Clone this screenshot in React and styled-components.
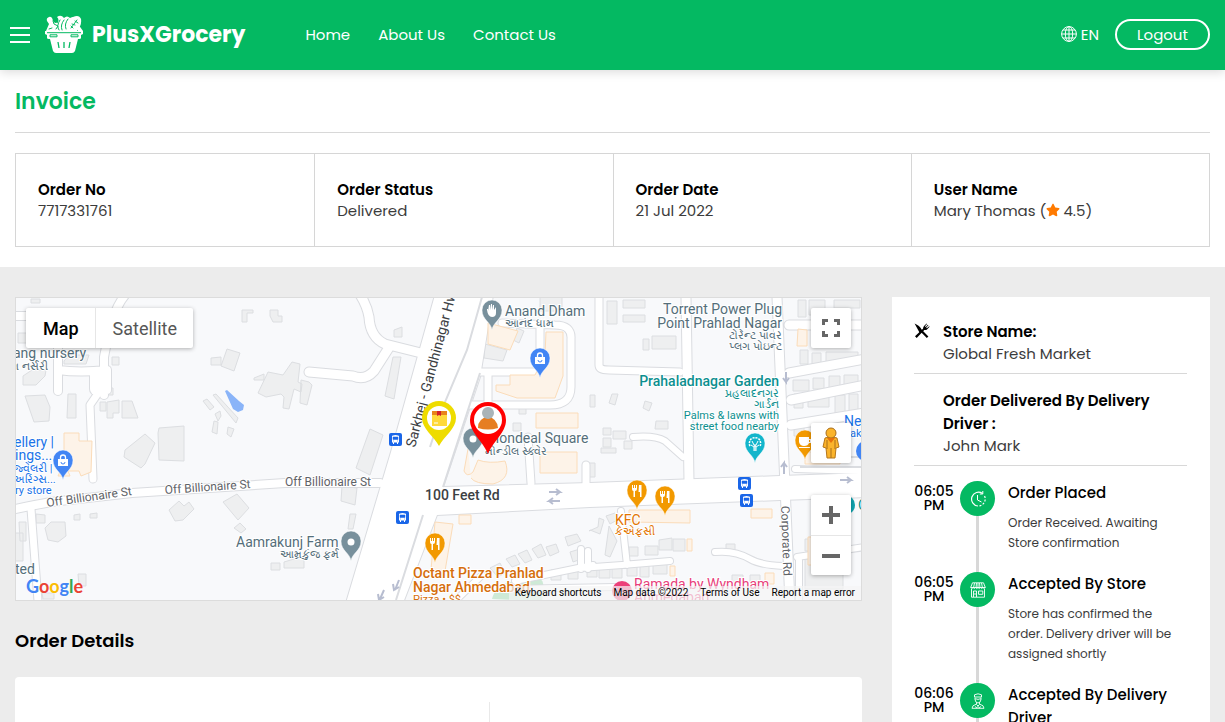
import React from 'react';
import styled, { createGlobalStyle } from 'styled-components';
import { FaStar } from 'react-icons/fa';

const GlobalStyle = createGlobalStyle`
    *, *::before, *::after { box-sizing: border-box; }
    body {
        margin: 0;
        background-color: #ececec;
        color: #000;
        font-family: Poppins, Inter, sans-serif;
        font-size: 15px;
    }
    h1, h2, h3, p, ul, ol, dl, dd { margin: 0; padding: 0; }
    ul, ol { list-style: none; }
    a { color: inherit; text-decoration: none; }
    button {
        font: inherit;
        padding: 0;
        border: 0;
        background: none;
        color: inherit;
        cursor: pointer;
    }
    svg { display: block; }
`;

const Header = styled.header`
    position: relative;
    z-index: 2;
    display: flex;
    align-items: center;
    height: 70px;
    padding: 0 15px 2px 10px;
    background-color: #04b962;
    color: #fff;
    box-shadow: 0 2px 10px rgba(0,0,0,0.15);
`;

const MenuButton = styled.button`
    display: flex;
    flex-direction: column;
    gap: 5px;
    width: 20px;
    padding-top: 2px;
    margin-right: 15px;
    span {
        height: 2px;
        background-color: #fff;
    }
`;

const Brand = styled.a`
    display: flex;
    align-items: center;
    gap: 8px;
    font-size: 22px;
    font-weight: 700;
`;

const Nav = styled.nav`
    display: flex;
    gap: 28px;
    margin-left: 60px;
    flex: 1;
    font-size: 15px;
`;

const Language = styled.button`
    display: flex;
    align-items: center;
    gap: 4px;
    margin-right: 16px;
    font-size: 15px;
`;

const Logout = styled.button`
    width: 95px;
    height: 31px;
    border: 2px solid #fff;
    border-radius: 16px;
    font-size: 15px;
`;

const Summary = styled.section`
    padding: 16px 15px 20px;
    background-color: #fff;
`;

const Title = styled.h1`
    padding-bottom: 14px;
    border-bottom: 1px solid #d8d8d8;
    margin-bottom: 20px;
    color: #04b962;
    font-size: 22px;
    line-height: 32px;
    font-weight: 600;
`;

const Facts = styled.dl`
    display: grid;
    grid-template-columns: repeat(4, 1fr);
    border: 1px solid #d6d6d6;
    line-height: 21px;
`;

const Fact = styled.div`
    padding: 25px 22px;
    & + & { border-left: 1px solid #d6d6d6; }
    dt { font-weight: 600; font-size: 15px; }
    dd {
        display: flex;
        align-items: center;
        color: #3c3c3c;
    }
    svg { margin: 0 3px 2px 0; color: #ff7a00; }
`;

const Columns = styled.main`
    display: grid;
    grid-template-columns: minmax(0, 1fr) 318px;
    align-items: start;
    gap: 30px;
    padding: 30px 15px;
`;

const MapBox = styled.div`
    position: relative;
    height: 304px;
    border: 1px solid #dcdcdc;
    overflow: hidden;
    font-family: Roboto, Arial, sans-serif;
    > svg { width: 100%; height: 100%; }
`;

const MapControl = styled.div`
    position: absolute;
    display: flex;
    flex-direction: ${p => (p.$column ? 'column' : 'row')};
    ${p => (p.$left ? 'left: 10px;' : 'right: 10px;')}
    top: ${p => p.$top}px;
    background-color: #fff;
    border-radius: 2px;
    box-shadow: 0 1px 4px rgba(0,0,0,0.3);
    button {
        display: flex;
        align-items: center;
        justify-content: center;
        width: ${p => (p.$left ? 'auto' : '40px')};
        height: 40px;
        padding: ${p => (p.$left ? '0 16px 0 17px' : '0')};
        color: #565656;
        font-size: 18px;
    }
    button + button {
        ${p => (p.$column ? 'border-top' : 'border-left')}: 1px solid #e6e6e6;
    }
    button[aria-pressed='true'] { color: #000; font-weight: 500; }
`;

const MapFooter = styled.div`
    position: absolute;
    right: 0;
    bottom: 0;
    display: flex;
    gap: 12px;
    padding: 0 6px;
    background-color: rgba(245,245,245,0.7);
    color: #000;
    font-size: 10px;
    line-height: 14px;
`;

const Google = styled.a`
    position: absolute;
    left: 10px;
    bottom: 2px;
    font-family: Lato, sans-serif;
    font-size: 18px;
    line-height: 24px;
    font-weight: 700;
    text-shadow: 0 0 2px #fff;
`;

const Letter = styled.span`
    color: ${p => p.$color};
`;

const SectionTitle = styled.h2`
    margin: 24px 0 20px;
    font-size: 18px;
    line-height: 32px;
    font-weight: 600;
`;

const Details = styled.section`
    display: grid;
    grid-template-columns: 474px 1fr;
    padding: 25px 0;
    min-height: 260px;
    border-radius: 4px;
    background-color: #fff;
    div + div { border-left: 1px solid #e9e9e9; }
`;

const Side = styled.aside`
    padding: 23px 23px 24px 22px;
    background-color: #fff;
`;

const Party = styled.div`
    display: grid;
    grid-template-columns: 16px 1fr;
    column-gap: 13px;
    padding-bottom: 8px;
    border-bottom: 1px solid #d8d8d8;
    line-height: 22px;
    & + & { padding-top: 15px; }
    > svg { margin-top: 3px; }
    h3 {
        grid-column: 2;
        font-size: 15px;
        line-height: 23px;
        font-weight: 600;
    }
    p { grid-column: 2; color: #3c3c3c; }
`;

const Timeline = styled.ol`
    margin-top: 15px;
`;

const Step = styled.li`
    position: relative;
    display: grid;
    grid-template-columns: 40px 35px 1fr;
    time {
        padding-top: 3px;
        font-size: 14px;
        line-height: 14px;
        font-weight: 500;
        text-align: center;
    }
`;

const Track = styled.div`
    display: flex;
    justify-content: center;
    margin-left: 6px;
    width: 35px;
    background: linear-gradient(#d8d8d8, #d8d8d8) center / 3px 100% no-repeat;
`;

const Dot = styled.span`
    display: flex;
    align-items: center;
    justify-content: center;
    width: 35px;
    height: 35px;
    border-radius: 50%;
    background-color: #04b962;
`;

const StepBody = styled.div`
    padding: 0 0 19px 19px;
    h3 {
        margin-bottom: 9px;
        font-size: 15px;
        line-height: 23px;
        font-weight: 500;
    }
    p {
        color: #3c3c3c;
        font-size: 12px;
        line-height: 20px;
    }
`;

const BasketLogo = () => (
    <svg width="39" height="39" viewBox="0 0 39 39" fill="#fff">
        <path d="M1 16 4 9 2 6Q1 3 4 2q3-1 4 4l2 2q4-1 5 3l1 5z" />
        <path d="M12 2q4-3 7 1 3-3 6 0 4-2 5 0l-8 14h-9q4-5-1-8 3-4 0-7z" />
        <path d="M22 16q-1-10 6-14 6-3 8 2 1 6-4 12z" />
        <path d="M33 9l5 7h-5z" />
        <g fill="none" stroke="#04b962" strokeWidth="1" strokeLinecap="round">
            <path d="M14 15q-3-4 1-10M17 15q-2-5 2-10M21 14q-2-5 2-10M8 6l1 3 4 2-2 3M4 14l3-1M26 13l6-8M27 9l3 1M30 6l3 2M26 11l2 2" />
        </g>
        <path d="M0 16h38v3l-2 1v3q0 1-2 1h-1l-3 12q-1 2-3 2H11q-2 0-3-2L5 24H4q-2 0-2-1v-3l-2-1z" />
        <path d="M2 17.700h34M5 19.800h7v2H5zM26 19.800h7v2h-7z" fill="none" stroke="#04b962" />
        <path d="M13 27l1 6M19 27v6M25 27l-1 6" fill="none" stroke="#04b962" strokeWidth="1.300" />
    </svg>
);

const GlobeIcon = () => (
    <svg width="16" height="16" viewBox="0 0 16 16" fill="none" stroke="#fff">
        <circle cx="8" cy="8" r="7.400" />
        <ellipse cx="8" cy="8" rx="3.700" ry="7.400" />
        <path d="M8 .6v14.800M.6 8h14.800M2 4h12M2 12h12" />
    </svg>
);

const CutleryIcon = () => (
    <svg width="16" height="16" viewBox="0 0 16 16">
        <path d="M.6.6q5 2 7.200 6.200l6.600 6.600-1.600 1.600-5.400-5.400-1.800.2z" />
        <path d="M1 13.300l8-7.600q0-2 1.500-3.200L12.600.6l.4.4-2 2.300.7.700L13.900 1.800l.5.4-2.200 2.300.7.700 2.300-2 .4.500-2.100 2.200Q12 7.400 10.300 7l-7.600 8z" />
    </svg>
);

const lineIcon = { width: 16, height: 16, viewBox: '0 0 16 16', fill: 'none', stroke: '#fff' };

const ClockIcon = () => (
    <svg {...lineIcon}>
        <path d="M12.500 2.500A6.900 6.900 0 1 0 8 15" strokeWidth="1.200" />
        <path d="M9.500 14.800A6.900 6.900 0 0 0 14.500 5" strokeDasharray="2 1.500" strokeWidth="1.200" />
        <path d="M12.800 0v3h-3M7.500 4v5l4 2" />
    </svg>
);

const StoreIcon = () => (
    <svg {...lineIcon} strokeWidth=".9">
        <path d="M2.500.8h11l1.800 4.700H.7zM4.500 1 3.500 6M6.500 1 6 6M8 1v5M9.500 1l.5 5M11.500 1l1 5M.7 5.500q1.200 2 2.400 0 1.300 2 2.500 0 1.200 2 2.400 0 1.200 2 2.400 0 1.300 2 2.500 0 1.200 2 2.400 0" />
        <path d="M1.500 7v8.200h13V7M3.500 15V9h3v6M8.500 9h4.300v3.300H8.500zM4 12h2" />
    </svg>
);

const DriverIcon = () => (
    <svg {...lineIcon} strokeWidth=".9">
        <path d="M4.500 4V1.800q3.500-2 7 0V4zM5 4.500v2Q5.500 10 8 10t3-3.500v-2M5 6h2q1 1 2 0h2M6.500 9.500v2L8 13l1.500-1.500v-2" />
        <path d="M2 15.300q0-3 4-4M14 15.300q0-3-4-4M2 15.300h12M5 13.500l2 1.500M11 13.500 9 15M8 13v2" />
    </svg>
);

// [width, path]
const roads = [
    [10, 'M0 212Q20 208 36 205L117 196 270 186 365 186'],
    [10, 'M0 19H45M43 19V94M43 73Q65 76 92 73V93M89 98V60L95 30Q102 6 112-4'],
    [14, 'M81 78V92'],
    [9, 'M86 84V92L75 108 78 182M16 212L23 304'],
    [11, 'M344-4Q352 8 354 20 355 40 370 47L406 56M375 49L359 74Q350 84 338 79L294 75'],
    [9, 'M487 26L540 28Q557 28 556 42V90Q556 108 535 108H448M464 75H525V30M473 78V106'],
    [9, 'M513 140L516 186M571 187V168M584 0V68Q584 73 594 73L665 75'],
    [11, 'M671 0L674 184M762 0L776 330M774 28H850M774 76L850 62M776 103L850 88M776 128L850 116'],
    [8, 'M618 140Q640 138 650 144L668 160M780 172L850 174M782 260L850 250M784 305V262'],
    [8, 'M467 278L434 310M606 214L612 268M566 252V272M565 271Q610 268 655 264M700 255Q720 253 735 262 745 268 768 269'],
    [8, 'M500 284L578 268M573 254V272M495 292L600 290'],
];

const highway = 'M420-2 376 155 331 306H388L422 218 575 210 765 203 850 200V176L765 179 575 186 428 190 465 80 478-2z';

const buildings = 'M16 2h9v4h-9zM3 36h9v10H3zM8 79l9-6h14l-1 6-9 9H8zM49 64l5-6h20l-3 9H49zM10 99l20-1 5 12-1 14-15 1zM53 97h8v24h-9zM91 91h7v7h-7zM97 60h7v8h-7zM85 105h6v9h-6zM92 105l12-2v13h-6v5h-6zM107 104h10l6 17h-16zM227 13h11v3h-6v9h-5zM255 13h8v6h4v6h-9l-3-6zM196 61l10-1v8h-10zM212 52l13 4-6 18-13-5zM239 81l10-4v6h-10zM253 75l15 3 9-13 8 2-2 18 4 2-1 8-7-3-5 20-6-1 1-11-3-3-15 3-8-4zM188 104l4-2 7 8-4 3zM198 98l3-1 22 24-2 5zM200 117l5-3 1 5-3 5zM199 124l4 1-1 12-5-2zM213 130l6 2-3 8-4-3zM144 131l25-2v35l-25-1-1-27zM110 153l20-16 10 9-10 21-4 4-17-11zM21 217l9 1v8h-9zM4 225h7v19H5zM0 236h8v28H0zM30 231l6-6h14l1 14-8 6-10-2zM59 218l6-1v6h-6zM75 217l7-1v5h-7zM63 277h8v12h-7zM27 296h12v6H28zM154 213l10-9 5 5 5-4 5 7-11 11-8 1zM208 205l14-8 12 14-11 12zM219 231l6-5 6 6-5 4zM256 266h9v7h-9zM269 265l20-6v12h-20zM286 83l8 2 3 3-5 20-7-2zM379 33l8-3v10h-8zM378 60h8l-7 42-9-3zM355 132l13 6-13 40-14-7zM327 189l15 2-2 17-14-4zM335 217h6l-3 15h-5zM470 47l22 6-4 11-19-3zM502 31l7 3-5 12-6-3zM525 0h22v14h-22zM592 4h10v23h-10zM608 3h22v8h-22zM608 18h22v7h-22zM637 39h24v13h-24zM628 42h6v11h-6zM575 98h5v12h-5zM597 97h6l-3 11-6-2zM630 104l7 2-3 8-6-3zM641 124h12v8h-13zM588 131h8v7h-8zM588 141h8v9h-8zM598 134h13v8h-13zM609 144h8v8h-8zM586 151h15v5h-15zM573 166h7v14h-7zM783 3h8v17h-8zM794 3h16v15h-16zM819 3h26v8h-26zM785 53h8v14h-8zM797 56h9v12h-9zM811 55h32v11h-32zM778 83h16v11h-16zM798 81h11v11h-11zM814 79h11v12h-11zM829 78h14v11h-14zM779 97h9v14h-9zM793 98h21v12h-21zM820 98h10v18h-10zM834 97h9v17h-9zM779 125h10v14h-10zM575 233l10 4 4-14-5-2-1 9-9 4zM591 219l9-3 4 6-9 5zM594 229l8 15-7 16-5-2zM614 250h9v9h-9zM630 249h13v9h-13zM644 243l13-2v12h-13zM658 242h12v12h-12zM572 272h10v8h-10zM584 271h11v10h-11zM597 269h10v12h-10zM612 268h10v11h-10zM625 268h9v12h-9zM638 267h14v10h-14zM711 247h9v7h-9zM475 271l10-5 5 10-7 4zM491 262l9-4 5 9-8 3zM503 257l9-4 5 10-7 3zM517 252l9-5 5 11-8 3zM531 250l10-3 3 8-9 4zM550 240l12-3 4 7-13 5zM555 255l10-3 4 9-11 4zM536 273h10v10h-10zM553 272h10v10h-10zM717 278h11v7h-11zM735 278h10v7h-10zM790 262h38v30h-38zM790 242h12v12h-12zM498 126h8v8h-8zM504 111h7v6h-7z';

const shops = 'M473 26l30 8-8 19-22-6zM531 35h17v44l-8 22h-38l-21-7V88h14V78h25l10-20zM521 116h42v15h-42zM525 155h37v21h-37zM49 136h15v8h13l-1 31-10 4-2-5h-11l2 5H43l6-13zM420 225l18 2-8 47-14-1zM614 213h61v13l-61-1zM736 212h21v9h-21zM444 218h12v9h-12zM783 32l9 1v16h-10zM672 242h5v12h-5zM655 269h5v10h-5zM750 276h9v11h-9zM790 155h35v12h-35zM793 240h18v28h-18z';

const Pin = ({ x, y, color, children }) => (
    <g transform={`translate(${x} ${y})`}>
        <path d="M0 19C-1 11-10 9-10-1A10 10 0 1 1 10-1C10 9 1 11 0 19z" fill={color} stroke="#fff" strokeWidth=".5" />
        <g fill="#fff">{children}</g>
    </g>
);

const Bag = () => (
    <g>
        <path d="M-5-2H5V5H-5z" />
        <path d="M-2.500-2v-1.500a2.500 2.500 0 0 1 5 0V-2" fill="none" stroke="#fff" strokeWidth="1.300" />
        <path d="M-2 1a2 2 0 0 0 4 0" fill="none" stroke="#4285f4" />
    </g>
);

const Fork = () => (
    <path d="M-5-6h1v3h1v-3h1v3h1v-3h1v4Q0 0-2 0v6h-1.500V0Q-5 0-5-2zM2-6h2.500V6H3V1H1.500z" />
);

const Bus = ({ x, y }) => (
    <g transform={`translate(${x} ${y})`}>
        <rect width="13" height="13" rx="2" fill="#1a66e8" />
        <path d="M3 3.500Q3 2 6.500 2T10 3.500V9.500H9V11H8V9.500H5V11H4V9.500H3z" fill="#fff" />
        <path d="M4 4h5v2.500H4zM4 8h1M8 8h1" fill="#1a66e8" stroke="#1a66e8" strokeWidth=".5" />
    </g>
);

const Label = styled.text`
    font-family: Roboto, 'Noto Sans', sans-serif;
    font-size: ${p => p.$size || 14}px;
    font-weight: ${p => p.$weight || 400};
    fill: ${p => p.$color || '#546e7a'};
    stroke: #fff;
    stroke-width: 2px;
    paint-order: stroke;
    text-anchor: ${p => p.$anchor || 'start'};
`;

const StreetMap = () => (
    <svg viewBox="1 1 845 302" preserveAspectRatio="xMidYMid slice" role="img" aria-label="Delivery map">
        <rect width="847" height="304" fill="#f8f9fb" />
        <path d={buildings} fill="#eeeff0" stroke="#dcdee1" />
        <path d="M477 302Q482 280 520 284 532 276 527 304z" fill="#ceead6" />
        <path d="M210 94l2-1 12 11 5 4-1 5-5 2-5-3z" fill="#8ab4f8" />
        <g fill="none" strokeLinecap="round" strokeLinejoin="round">
            {roads.map(([w, d]) => <path key={d} d={d} strokeWidth={w} stroke="#dadce0" />)}
            <path d={highway} stroke="#dadce0" strokeWidth="2" />
            {roads.map(([w, d]) => <path key={d} d={d} strokeWidth={w - 2} stroke="#fff" />)}
        </g>
        <path d={highway} fill="#fff" />
        <path d="M467 0 452 53 430 105 415 150 M465 76 440 153 428 190M408 218 381 303M790 160H847M785 170H847" fill="none" stroke="#dadce0" strokeWidth="2" />
        <path d={shops} fill="#fdf3e8" stroke="#fbdcb9" />
        <path d="M453 152L449 174Q452 181 458 175L463 163Q474 167 490 164 497 182 478 187 460 187 456 181" fill="#fdf3e8" stroke="#fbdcb9" />
        <g fill="none" stroke="#b7bdd0" strokeWidth="2">
            <path d="M534 195h11l-4-3m4 3-4 3M545 204h-11l4-3m-4 3 4 3M771 75v10l-3-4m3 4 3-4M769 177v-11l-3 4m3-4 3 4M825 183h11l-4-3m4 3-4 3M369 293l-4 9M363 297l1 6 5-3M384 283l-4 10M378 287l1 6 5-3" />
        </g>

        <Label $size={12} $color="#5f6368" transform="translate(32 210) rotate(-8)">Off Billionaire St</Label>
        <Label $size={12} $color="#5f6368" transform="translate(150 197) rotate(-4)">Off Billionaire St</Label>
        <Label $size={12} $color="#5f6368" x="270" y="189">Off Billionaire St</Label>
        <Label $color="#3c4043" transform="translate(400 151) rotate(-75)">Sarkhej - Gandhinagar Hwy</Label>
        <Label $color="#3c4043" $weight={500} x="410" y="203">100 Feet Rd</Label>
        <Label $size={12} $color="#5f6368" transform="translate(766 209) rotate(88)">Corporate Rd</Label>

        <Label x="-2" y="61">ang nursery</Label>
        <Label $size={11} x="-4" y="73">ગ નર્સરી</Label>
        <Label $color="#1a73e8" x="-1" y="150">ellery |</Label>
        <Label $color="#1a73e8" x="0" y="163">ings...</Label>
        <Label $size={11} $color="#1a73e8" x="-2" y="175">જ્વેલરી |</Label>
        <Label $size={11} $color="#1a73e8" x="-2" y="186">અરિંગ્સ...</Label>
        <Label $size={11} $color="#1a73e8" x="0" y="197">ry store</Label>
        <Label x="0" y="277">ted</Label>
        <Label x="221" y="250">Aamrakunj Farm</Label>
        <Label $size={11} $anchor="end" x="324" y="261">આમ્રકુંજ ફર્મ</Label>
        <Label x="490" y="19">Anand Dham</Label>
        <Label $size={11} x="490" y="30">આનંદ ધામ</Label>
        <Label x="472" y="146">Mondeal Square</Label>
        <Label $size={11} x="470" y="158">મોન્ડીલ સ્ક્વેર</Label>
        <Label $anchor="end" x="767" y="17">Torrent Power Plug</Label>
        <Label $anchor="end" x="767" y="31">Point Prahlad Nagar</Label>
        <Label $size={11} $anchor="end" x="767" y="42">ટોરેન્ટ પાવર</Label>
        <Label $size={11} $anchor="end" x="767" y="53">પ્લગ પોઇન્ટ</Label>
        <Label $color="#0c8f8f" $weight={500} $anchor="end" x="764" y="89">Prahaladnagar Garden</Label>
        <Label $size={11} $color="#0c8f8f" $anchor="end" x="764" y="100">પ્રહલાદનગર</Label>
        <Label $size={11} $color="#0c8f8f" $anchor="end" x="764" y="111">ગાર્ડન</Label>
        <Label $size={11} $color="#0c8f8f" $anchor="end" x="764" y="122">Palms &amp; lawns with</Label>
        <Label $size={11} $color="#0c8f8f" $anchor="end" x="764" y="133">street food nearby</Label>
        <Label $color="#1a73e8" x="829" y="129">New</Label>
        <Label $size={11} $color="#1a73e8" x="835" y="140">akery</Label>
        <Label $color="#e37400" x="600" y="228">KFC</Label>
        <Label $size={11} $color="#e37400" x="600" y="238">કેએફસી</Label>
        <Label $color="#d56e0c" $weight={500} x="398" y="281">Octant Pizza Prahlad</Label>
        <Label $color="#d56e0c" $weight={500} x="398" y="295">Nagar Ahmedabad</Label>
        <Label $size={11} $color="#d56e0c" x="398" y="306">Pizza • $$</Label>
        <circle cx="607" cy="294" r="10" fill="#ec407a" />
        <path d="M601 291v7M601 296h12v2" stroke="#fff" fill="none" />
        <Label $color="#e83e7b" x="619" y="292">Ramada by Wyndham</Label>
        <Label $color="#e83e7b" x="619" y="305">Ahmedabad</Label>

        <Bus x={374} y={136} />
        <Bus x={381} y={214} />
        <Bus x={723} y={180} />
        <Bus x={725} y={197} />
        <Pin x={48} y={164} color="#4285f4"><Bag /></Pin>
        <Pin x={525} y={62} color="#4285f4"><Bag /></Pin>
        <Pin x={336} y={245} color="#78909c"><circle r="3.500" /></Pin>
        <Pin x={458} y={142} color="#78909c"><circle r="3.500" /></Pin>
        <Pin x={477} y={14} color="#78909c">
            <path d="M-5-1v-1h1v2l1-6h1v5l1-6H0v6l1-5h1v5l2-3v6q0 4-4 4t-5-7z" />
        </Pin>
        <Pin x={622} y={194} color="#f29900"><Fork /></Pin>
        <Pin x={650} y={200} color="#f29900"><Fork /></Pin>
        <Pin x={420} y={247} color="#f29900"><Fork /></Pin>
        <Pin x={790} y={144} color="#f29900">
            <path d="M-6-4H4v2h3v4H4Q3 5-1 5t-5-4zM-6 6H5v1H-6zM4-1v2h1v-2z" />
        </Pin>
        <Pin x={740} y={147} color="#12b5cb">
            <path d="M-1 7V3L-4 1M0 7V0M1 7V3L4 1M0 3-3-3M0 3 3-3" fill="none" stroke="#fff" />
            <path d="M-5 2A5 5 0 0 1-5-3 4 4 0 0 1 0-6 4 4 0 0 1 5-3 5 5 0 0 1 5 2" fill="none" stroke="#fff" strokeWidth="1.500" strokeDasharray="2 1" />
        </Pin>
        <circle cx="851" cy="154" r="10" fill="#4285f4" />
        <circle cx="830" cy="208" r="10" fill="#12a4af" />
        <Label $color="#0c8f8f" x="843" y="213">C</Label>

        <path d="M424 149C419 139 407 132 407 121A17 17 0 0 1 441 121C441 132 429 139 424 149z" fill="#eedc00" />
        <circle cx="424" cy="121" r="12" fill="#fff" />
        <path d="M417 114h15v4h-15z" fill="#e8831c" />
        <path d="M417 118h15v11h-15z" fill="#ffd93b" />
        <path d="M422 114h4v5l-2-1-2 1z" fill="#d3202c" />
        <path d="M419 126h4" stroke="#fff" />
        <path d="M473 157C468 144 455 136 455 123A18 18 0 0 1 491 123C491 136 478 144 473 157z" fill="#f00" />
        <circle cx="473" cy="123" r="14" fill="#fff" />
        <path d="M463 131q0-10 10-11 9 1 10 11-10 3-20 0z" fill="#e67e22" />
        <circle cx="473" cy="116" r="6" fill="#aab4b8" />
    </svg>
);

const FullscreenIcon = () => (
    <svg width="18" height="18" viewBox="0 0 18 18" fill="none" stroke="#666" strokeWidth="3">
        <path d="M1.500 6V1.500H6M12 1.500h4.500V6M16.500 12v4.500H12M6 16.500H1.500V12" />
    </svg>
);

const Pegman = () => (
    <svg width="18" height="32" viewBox="0 0 18 32">
        <path d="M3 11q6-3 12 0l2 9-3 1-1 10H5L4 21l-3-1z" fill="#fbb42b" stroke="#b5761a" />
        <circle cx="9" cy="6" r="5" fill="#fbb42b" stroke="#a86e1c" />
        <path d="M5 11h8l-4 5z" fill="#e8710a" />
        <path d="M9 21v10M5 13v9M13 13v9" stroke="#a86e1c" />
    </svg>
);

const ZoomIcon = ({ plus }) => (
    <svg width="18" height="18" viewBox="0 0 18 18" stroke="#666" strokeWidth="4">
        <path d={plus ? 'M0 9h18M9 0v18' : 'M0 9h18'} />
    </svg>
);

const word = [['G', '#4285f4'], ['o', '#ea4335'], ['o', '#fbbc04'], ['g', '#4285f4'], ['l', '#34a853'], ['e', '#ea4335']];

const facts = [
    ['Order No', '7717331761'],
    ['Order Status', 'Delivered'],
    ['Order Date', '21 Jul 2022'],
];

const steps = [
    { time: '06:05 PM', icon: <ClockIcon />, title: 'Order Placed', text: 'Order Received. Awaiting Store confirmation' },
    { time: '06:05 PM', icon: <StoreIcon />, title: 'Accepted By Store', text: 'Store has confirmed the order. Delivery driver will be assigned shortly' },
    { time: '06:06 PM', icon: <DriverIcon />, title: 'Accepted By Delivery Driver', text: '' },
];

const App = () => (
    <>
        <GlobalStyle />
        <Header>
            <MenuButton aria-label="Menu"><span /><span /><span /></MenuButton>
            <Brand href="#"><BasketLogo />PlusXGrocery</Brand>
            <Nav>
                <a href="#">Home</a>
                <a href="#">About Us</a>
                <a href="#">Contact Us</a>
            </Nav>
            <Language><GlobeIcon />EN</Language>
            <Logout>Logout</Logout>
        </Header>
        <Summary>
            <Title>Invoice</Title>
            <Facts>
                {facts.map(([name, value]) => (
                    <Fact key={name}><dt>{name}</dt><dd>{value}</dd></Fact>
                ))}
                <Fact>
                    <dt>User Name</dt>
                    <dd>Mary Thomas (<FaStar size={14} />4.5)</dd>
                </Fact>
            </Facts>
        </Summary>
        <Columns>
            <div>
                <MapBox>
                    <StreetMap />
                    <MapControl $left $top={10}>
                        <button aria-pressed="true">Map</button>
                        <button aria-pressed="false">Satellite</button>
                    </MapControl>
                    <MapControl $top={10}><button aria-label="Fullscreen"><FullscreenIcon /></button></MapControl>
                    <MapControl $top={125}><button aria-label="Street View"><Pegman /></button></MapControl>
                    <MapControl $column $top={197}>
                        <button aria-label="Zoom in"><ZoomIcon plus /></button>
                        <button aria-label="Zoom out"><ZoomIcon /></button>
                    </MapControl>
                    <Google href="#">
                        {word.map(([l, c], i) => <Letter key={i} $color={c}>{l}</Letter>)}
                    </Google>
                    <MapFooter>
                        <button>Keyboard shortcuts</button>
                        <span>Map data ©2022</span>
                        <a href="#">Terms of Use</a>
                        <a href="#">Report a map error</a>
                    </MapFooter>
                </MapBox>
                <SectionTitle>Order Details</SectionTitle>
                <Details><div /><div /></Details>
            </div>
            <Side>
                <Party>
                    <CutleryIcon />
                    <h3>Store Name:</h3>
                    <p>Global Fresh Market</p>
                </Party>
                <Party>
                    <h3>Order Delivered By Delivery Driver :</h3>
                    <p>John Mark</p>
                </Party>
                <Timeline>
                    {steps.map(s => (
                        <Step key={s.title}>
                            <time>{s.time}</time>
                            <Track><Dot>{s.icon}</Dot></Track>
                            <StepBody><h3>{s.title}</h3><p>{s.text}</p></StepBody>
                        </Step>
                    ))}
                </Timeline>
            </Side>
        </Columns>
    </>
);

export default App;
